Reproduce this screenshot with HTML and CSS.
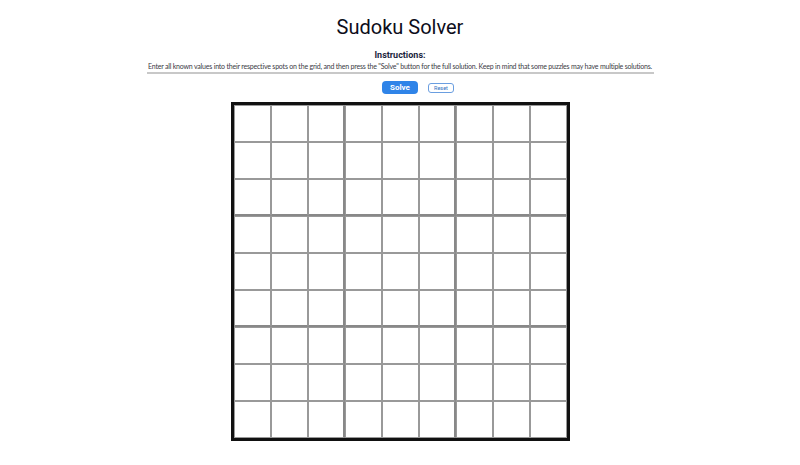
FILE: index.html
```html
<!DOCTYPE html>
<html lang="en">
<head>
  <meta charset="UTF-8" />
  <meta name="viewport" content="width=device-width, initial-scale=1.0"/>
  <title>Sudoku Solver</title>
  <link rel="stylesheet" href="styles.css">
</head>
<body>

  <h1 class="title">Sudoku Solver</h1>

  <div class="instructions">
    <h3>Instructions:</h3>
    <p>Enter all known values into their respective spots on the grid, and then press the "Solve" button for the full solution. Keep in mind that some puzzles may have multiple solutions.</p>
  </div>

  <div class="controls">
    <button class="btn-solve" id="solveBtn">Solve</button>
    <button class="btn-reset" id="resetBtn">Reset</button>
  </div>

  <div class="board" id="board"></div>

  <script>
    // Build the 9x9 grid of inputs
    const board = document.getElementById('board');
    for (let r = 0; r < 9; r++) {
      for (let c = 0; c < 9; c++) {
        const cell = document.createElement('input');
        cell.type = 'text';
        cell.maxLength = 1;
        cell.className = 'cell';
        if (c === 2 || c === 5) cell.classList.add('box-right');
        if (r === 2 || r === 5) cell.classList.add('box-bottom');
        board.appendChild(cell);
      }
    }

    document.getElementById('resetBtn').addEventListener('click', () => {
      board.querySelectorAll('.cell').forEach(c => c.value = '');
    });
  </script>

</body>
</html>
```

FILE: styles.css
```css
body {
  font-family: Roboto, "Liberation Sans", sans-serif;
  background: #fff;
  color: #14142b;
  margin: 0;
  padding: 0;
  display: flex;
  flex-direction: column;
  align-items: center;
}

.title {
  font-size: 20px;
  font-weight: 400;
  line-height: 24px;
  margin: 15px 0 0;
  color: #0d0d1a;
}

.instructions {
  width: 507px;
  margin-top: 11px;
  text-align: center;
  border-bottom: 2px solid #c8c8c8;
  padding-bottom: 1px;
}

.instructions h3 {
  font-size: 9px;
  font-weight: 700;
  line-height: 11px;
  margin: 0;
  color: #1a1f3d;
}

.instructions p {
  font-family: Lato, "Liberation Sans", sans-serif;
  font-size: 7px;
  letter-spacing: -0.2px;
  line-height: 9px;
  margin: 1px 0 0;
  color: #3a3a44;
  white-space: nowrap;
}

.controls {
  width: 200px;
  display: grid;
  grid-template-columns: 1fr auto 1fr;
  column-gap: 10px;
  align-items: center;
  margin-top: 7px;
}

.btn-solve {
  grid-column: 2;
  background: #2f84e8;
  color: #fff;
  border: none;
  border-radius: 4px;
  font-family: inherit;
  font-size: 8px;
  font-weight: 700;
  width: 36px;
  height: 13px;
  padding: 0;
  cursor: pointer;
}

.btn-reset {
  grid-column: 3;
  justify-self: start;
  background: #fff;
  color: #2f6fc0;
  border: 1px solid #6a9ee0;
  border-radius: 3px;
  font-family: inherit;
  font-size: 5.5px;
  width: 26px;
  height: 10px;
  padding: 0;
  cursor: pointer;
}

.board {
  margin-top: 8px;
  display: grid;
  grid-template-columns: repeat(9, 37px);
  grid-template-rows: repeat(9, 37px);
  border: 3px solid #111;
  background: #fff;
}

.cell {
  width: 100%;
  height: 100%;
  box-sizing: border-box;
  border: 1px solid #999;
  margin: 0;
  padding: 0;
  text-align: center;
  font-family: inherit;
  font-size: 18px;
  outline: none;
}

.box-right {
  border-right: 2px solid #888;
}

.box-bottom {
  border-bottom: 2px solid #888;
}
```
